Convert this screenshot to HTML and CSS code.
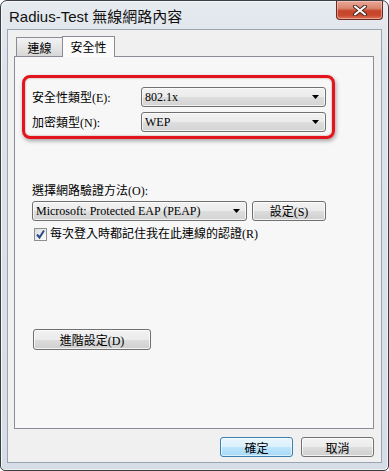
FILE: index.html
```html
<!DOCTYPE html>
<html lang="zh-Hant">
<head>
  <meta charset="UTF-8">
  <title>Radius-Test 無線網路內容</title>
  <link rel="stylesheet" href="styles.css">
</head>
<body>
  <div class="window">
    <div class="titlebar">
      <span class="title">Radius-Test 無線網路內容</span>
      <button type="button" class="close-btn">
        <svg width="16" height="11" viewBox="0 0 16 11">
          <path d="M3 1.5 L13 9.5 M13 1.5 L3 9.5" stroke="#4a2a24" stroke-width="4" stroke-linecap="round"/>
          <path d="M3 1.5 L13 9.5 M13 1.5 L3 9.5" stroke="#ffffff" stroke-width="2" stroke-linecap="round"/>
        </svg>
      </button>
    </div>

    <div class="client">
      <div class="tabs">
        <div class="tab">連線</div>
        <div class="tab active">安全性</div>
      </div>

      <div class="panel">
        <div class="highlight">
          <div class="field-row">
            <span class="field-label">安全性類型(E):</span>
            <div class="combo">
              <span>802.1x</span>
              <svg class="arrow" width="7" height="4" viewBox="0 0 7 4"><polygon points="0,0 7,0 3.5,4" fill="#000"/></svg>
            </div>
          </div>
          <div class="field-row">
            <span class="field-label">加密類型(N):</span>
            <div class="combo">
              <span>WEP</span>
              <svg class="arrow" width="7" height="4" viewBox="0 0 7 4"><polygon points="0,0 7,0 3.5,4" fill="#000"/></svg>
            </div>
          </div>
        </div>

        <div class="auth">
          <div class="caption">選擇網路驗證方法(O):</div>
          <div class="auth-row">
            <div class="combo auth-combo">
              <span>Microsoft: Protected EAP (PEAP)</span>
              <svg class="arrow" width="7" height="4" viewBox="0 0 7 4"><polygon points="0,0 7,0 3.5,4" fill="#000"/></svg>
            </div>
            <button type="button" class="btn settings-btn">設定(S)</button>
          </div>
          <label class="check">
            <span class="check-box">
              <svg width="11" height="11" viewBox="0 0 11 11">
                <path d="M2 5.5 L4.5 8.5 L9 1.5" fill="none" stroke="#2f4a8c" stroke-width="2"/>
              </svg>
            </span>
            每次登入時都記住我在此連線的認證(R)
          </label>
          <button type="button" class="btn advanced-btn">進階設定(D)</button>
        </div>
      </div>

      <div class="footer">
        <button type="button" class="btn default">確定</button>
        <button type="button" class="btn">取消</button>
      </div>
    </div>
  </div>
</body>
</html>
```

FILE: styles.css
```css
* {
  margin: 0;
  padding: 0;
  box-sizing: border-box;
}

body {
  background: #ffffff;
  font-family: 'Liberation Serif', 'Noto Sans CJK TC', serif;
  font-size: 12px;
  color: #000;
}

.window {
  width: 389px;
  height: 471px;
  display: flex;
  flex-direction: column;
  padding: 0 6px 7px 6px;
  border: 1px solid #3a3d42;
  border-radius: 7px 7px 5px 5px;
  background: linear-gradient(180deg, #e6ebf0 0%, #dde3ea 60px, #d6dde6 100%);
  box-shadow: inset 1px 1px 0 #f6f8fa, inset -1px -1px 0 #eef1f4;
}

.titlebar {
  height: 28px;
  display: flex;
  align-items: flex-start;
  margin-right: -1px;
}

.title {
  font-family: 'Liberation Sans', 'Noto Sans CJK TC', sans-serif;
  font-size: 15px;
  line-height: 18px;
  margin: 7px 0 0 2px;
  color: #111;
}

.close-btn {
  margin-left: auto;
  width: 47px;
  height: 19px;
  border: 1px solid #6b2b24;
  border-top: none;
  border-radius: 0 0 4px 4px;
  background: linear-gradient(180deg, #e9a898 0%, #d98670 40%, #c6452b 55%, #c9492d 80%, #dd7a5c 100%);
  box-shadow: inset 0 0 0 1px rgba(255, 220, 210, 0.45);
  display: flex;
  align-items: center;
  justify-content: center;
}

.client {
  flex: 1;
  display: flex;
  flex-direction: column;
  background: #f0f0f0;
  border: 1px solid #9ba5b1;
  padding: 6px 7px 5px 6px;
}

.tabs {
  height: 20px;
  display: flex;
  align-items: flex-end;
  padding-left: 2px;
}

.tab {
  height: 19px;
  width: 47px;
  border: 1px solid #898c95;
  border-bottom: none;
  background: linear-gradient(180deg, #f3f3f3 0%, #e6e6e6 50%, #d7d7d7 100%);
  font-family: 'Noto Sans CJK TC', sans-serif;
  font-size: 12px;
  line-height: 18px;
  text-align: center;
  padding-top: 1px;
}

.tab.active {
  position: relative;
  z-index: 1;
  width: 53px;
  height: 21px;
  margin-left: -1px;
  margin-bottom: -1px;
  background: #fbfbfb;
  padding-top: 0;
  line-height: 19px;
}

.panel {
  flex: 1;
  background: #f7f7f7;
  border: 1px solid #898c95;
  padding: 18px 0 0 7px;
}

.highlight {
  width: 313px;
  border: 3px solid #e3141b;
  border-radius: 8px;
  padding: 9px 6px 4px 7px;
  box-shadow: 1px 2px 4px rgba(0, 0, 0, 0.35), inset 0 0 2px rgba(120, 0, 0, 0.5);
  display: flex;
  flex-direction: column;
  gap: 5px;
}

.field-row {
  display: grid;
  grid-template-columns: 109px 185px;
  align-items: center;
}

.field-label {
  font-family: 'Liberation Serif', 'Noto Sans CJK TC', serif;
  font-size: 12px;
}

.combo {
  height: 20px;
  display: flex;
  align-items: center;
  justify-content: space-between;
  border: 1px solid #707070;
  border-radius: 3px;
  padding: 0 6px 0 3px;
  background: linear-gradient(180deg, #f2f2f2 0%, #ebebeb 50%, #dddddd 51%, #d4d4d4 100%);
  box-shadow: inset 0 0 0 1px rgba(255, 255, 255, 0.7);
  font-family: 'Liberation Serif', 'Noto Sans CJK TC', serif;
  font-size: 12px;
  font-weight: normal;
}

.arrow {
  flex-shrink: 0;
}

.auth {
  padding-left: 10px;
  margin-top: 44px;
}

.caption {
  font-family: 'Liberation Serif', 'Noto Sans CJK TC', serif;
  line-height: 16px;
}

.auth-row {
  display: flex;
  gap: 5px;
  margin-top: 2px;
}

.auth-combo {
  width: 215px;
}

.btn {
  height: 20px;
  border: 1px solid #707070;
  border-radius: 3px;
  background: linear-gradient(180deg, #f2f2f2 0%, #ebebeb 50%, #dddddd 51%, #cfcfcf 100%);
  box-shadow: inset 0 0 0 1px rgba(255, 255, 255, 0.75);
  font-family: 'Liberation Serif', 'Noto Sans CJK TC', serif;
  font-size: 12px;
  color: #000;
}

.settings-btn {
  width: 74px;
}

.check {
  display: flex;
  align-items: center;
  gap: 3px;
  margin: 6px 0 0 2px;
  font-family: 'Liberation Serif', 'Noto Sans CJK TC', serif;
  line-height: 14px;
}

.check-box {
  width: 13px;
  height: 13px;
  border: 1px solid #8e8f8f;
  background: linear-gradient(135deg, #dcdcdc 0%, #ffffff 100%);
  display: flex;
  align-items: center;
  justify-content: center;
}

.advanced-btn {
  display: block;
  width: 118px;
  height: 21px;
  margin: 88px 0 0 1px;
}

.footer {
  margin-top: 8px;
  display: flex;
  justify-content: flex-end;
  gap: 8px;
}

.footer .btn {
  width: 73px;
  font-family: 'Noto Sans CJK TC', sans-serif;
}

.btn.default {
  border-color: #3c7fb1;
  background: linear-gradient(180deg, #eaf6fd 0%, #d9f0fc 50%, #bee6fd 51%, #a7d9f5 100%);
  box-shadow: inset 0 0 0 1px rgba(255, 255, 255, 0.6);
}
```
